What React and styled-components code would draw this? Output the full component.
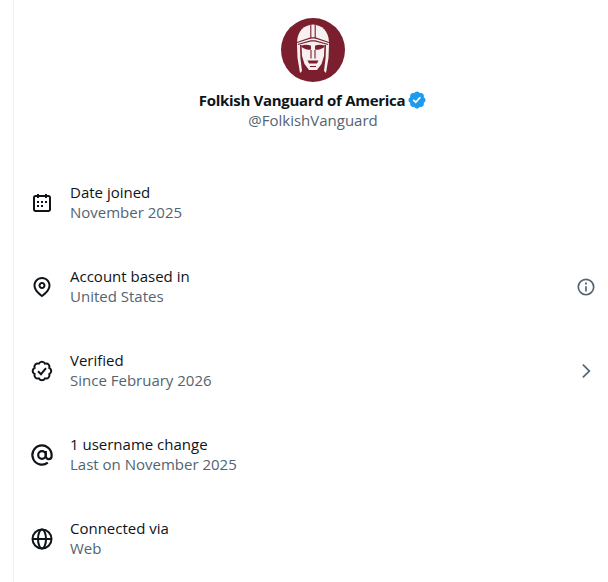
import React from "react";
import styled, { createGlobalStyle } from "styled-components";

const Global = createGlobalStyle`
  html, body { margin: 0; padding: 0; background: #fff; overflow: hidden; }
  body { font-family: "Open Sans", "Noto Sans", "Liberation Sans", sans-serif; }
`;

const Viewport = styled.div`
  width: 608px;
  height: 582px;
  overflow: hidden;
  padding-left: 13px;
  box-sizing: border-box;
`;

const Column = styled.main`
  width: 598px;
  min-height: 582px;
  border-left: 1px solid #eff3f4;
  box-sizing: content-box;
`;

const Header = styled.header`
  display: flex;
  flex-direction: column;
  align-items: center;
  padding-top: 18px;
  margin-bottom: 30px;
`;

const AvatarSvg = styled.svg`
  display: block;
  width: 64px;
  height: 64px;
`;

const NameRow = styled.div`
  display: flex;
  align-items: center;
  gap: 2px;
  margin-top: 8px;
  height: 20px;
`;

const Name = styled.span`
  font-size: 15px;
  line-height: 20px;
  font-weight: 700;
  letter-spacing: -0.3px;
  color: #0f1419;
`;

const Badge = styled.svg`
  width: 20px;
  height: 20px;
  fill: #1d9bf0;
  display: block;
`;

const Handle = styled.div`
  font-size: 15px;
  line-height: 20px;
  color: #536471;
`;

const List = styled.ul`
  list-style: none;
  margin: 0;
  padding: 0;
`;

const Row = styled.li`
  display: flex;
  align-items: center;
  height: 84px;
  padding: 0 16px;
  gap: 16px;
`;

const Icon = styled.svg`
  flex: none;
  width: 24px;
  height: 24px;
  margin-top: 2px;
  display: block;
  color: #0f1419;
`;

const Texts = styled.div`
  flex: 1;
  min-width: 0;
`;

const Title = styled.div`
  font-size: 15px;
  line-height: 20px;
  color: #0f1419;
`;

const Sub = styled.div`
  font-size: 15px;
  line-height: 20px;
  color: #536471;
`;

const TrailingIcon = styled.svg`
  flex: none;
  width: ${(p) => p.$size}px;
  height: ${(p) => p.$size}px;
  margin-top: 2px;
  display: block;
  color: #536471;
`;

const Avatar = () => (
  <AvatarSvg viewBox="0 0 64 64" aria-hidden="true">
    <circle cx="32" cy="32" r="32" fill="#7b1f2e" />
    <g fill="#f7f0f0">
      <path d="M32 6.5C23 7 16.5 13 16 24v3h32v-3C47.5 13 41 7 32 6.5z" />
      <path d="M16 27l.5 13L19 55l2-2-1.6-13-.4-13zM48 27l-.5 13L45 55l-2-2 1.6-13 .4-13z" />
      <path d="M20.5 25h23l-.5 13-2.5 8-4.5 6h-8l-4.5-6-2.5-8z" />
    </g>
    <g fill="none" stroke="#7b1f2e" strokeWidth="1.1">
      <path d="M29.8 7v13.5M34.2 7v13.5" />
      <path d="M16 24.5l13.8-4.6h4.4L48 24.5" />
      <path d="M16.8 26.5l13-3.6h4.4l13 3.6" />
      <path d="M30 32v8.5M34 32v8.5" />
      <path d="M29 48.5h6" />
    </g>
    <g fill="#7b1f2e">
      <path d="M20.5 27.5c3.5-1.3 7-1 9.5.3v3.6c-3.4.9-7.2-.4-9.5-2.6z" />
      <path d="M43.5 27.5c-3.5-1.3-7-1-9.5.3v3.6c3.4.9 7.2-.4 9.5-2.6z" />
      <path d="M26.5 42.5h11l-1.5 3h-8z" />
    </g>
  </AvatarSvg>
);

const rows = [
  {
    title: "Date joined",
    sub: "November 2025",
    icon: (
      <path fill="currentColor" d="M7 4V3h2v1h6V3h2v1h1.5C19.89 4 21 5.12 21 6.5v12c0 1.38-1.11 2.5-2.5 2.5h-13C4.12 21 3 19.88 3 18.5v-12C3 5.12 4.12 4 5.5 4H7zm0 2H5.5c-.27 0-.5.22-.5.5v12c0 .28.23.5.5.5h13c.28 0 .5-.22.5-.5v-12c0-.28-.22-.5-.5-.5H17v1h-2V6H9v1H7V6zm0 6h2v-2H7v2zm0 4h2v-2H7v2zm4-4h2v-2h-2v2zm0 4h2v-2h-2v2zm4-4h2v-2h-2v2z" />
    ),
  },
  {
    title: "Account based in",
    sub: "United States",
    trailing: "info",
    icon: (
      <path fill="currentColor" d="M12 7c-1.93 0-3.5 1.57-3.5 3.5S10.07 14 12 14s3.5-1.57 3.5-3.5S13.93 7 12 7zm0 5c-.827 0-1.5-.673-1.5-1.5S11.173 9 12 9s1.5.673 1.5 1.5S12.827 12 12 12zm0-10c-4.687 0-8.5 3.813-8.5 8.5 0 5.967 7.621 11.116 7.945 11.332l.555.37.555-.37c.324-.216 7.945-5.365 7.945-11.332C20.5 5.813 16.687 2 12 2zm0 17.77c-1.665-1.241-6.5-5.196-6.5-9.27C5.5 6.916 8.416 4 12 4s6.5 2.916 6.5 6.5c0 4.073-4.835 8.028-6.5 9.27z" />
    ),
  },
  {
    title: "Verified",
    sub: "Since February 2026",
    trailing: "chevron",
    icon: (
      <>
        <path fill="none" stroke="currentColor" strokeWidth="2" d="M21.25 12c0-1.3-.8-2.43-2-3.04.42-1.26.18-2.64-.74-3.56s-2.29-1.15-3.55-.74c-.6-1.19-1.74-1.99-3-1.99s-2.43.8-3.03 1.99c-1.27-.41-2.65-.18-3.56.74s-1.15 2.3-.73 3.56c-1.19.61-2 1.74-2 3.04s.81 2.43 2 3.04c-.42 1.26-.19 2.64.73 3.56s2.29 1.14 3.55.74c.61 1.19 1.74 1.99 3.04 1.99s2.44-.8 3.04-1.99c1.26.4 2.64.18 3.55-.74s1.16-2.3.74-3.56c1.19-.61 1.96-1.74 1.96-3.04z" />
        <path fill="none" stroke="currentColor" strokeWidth="2" d="M8 12.2l3 3 5-6" />
      </>
    ),
  },
  {
    title: "1 username change",
    sub: "Last on November 2025",
    icon: (
      <g fill="none" stroke="currentColor" strokeWidth="2.2">
        <circle cx="12" cy="12" r="3.8" />
        <path d="M15.8 8v5.2a2.9 2.9 0 0 0 5.8 0V12a9.6 9.6 0 1 0-3.8 7.7" />
      </g>
    ),
  },
  {
    title: "Connected via",
    sub: "Web",
    icon: (
      <g fill="none" stroke="currentColor" strokeWidth="2">
        <circle cx="12" cy="12" r="9.5" />
        <ellipse cx="12" cy="12" rx="4" ry="9.5" />
        <path d="M3 12h18" />
      </g>
    ),
  },
];

const Trailing = ({ kind }) =>
  kind === "info" ? (
    <TrailingIcon $size={20} viewBox="0 0 24 24" aria-hidden="true">
      <circle cx="12" cy="12" r="9.25" fill="none" stroke="currentColor" strokeWidth="2" />
      <path fill="currentColor" d="M11 11h2v6.5h-2zM10.9 6.6h2.2v2.3h-2.2z" />
    </TrailingIcon>
  ) : (
    <TrailingIcon $size={20} viewBox="0 0 24 24" aria-hidden="true">
      <path fill="currentColor" d="M14.586 12L7.543 4.96l1.414-1.42L17.414 12l-8.457 8.46-1.414-1.42L14.586 12z" />
    </TrailingIcon>
  );

export default function App() {
  return (
    <>
      <Global />
      <Viewport>
        <Column>
          <Header>
            <Avatar />
            <NameRow>
              <Name>Folkish Vanguard of America</Name>
              <Badge viewBox="0 0 24 24" aria-label="Verified account">
                <path d="M22.25 12c0-1.43-.88-2.67-2.19-3.34.46-1.39.2-2.9-.81-3.91s-2.52-1.27-3.91-.81c-.66-1.31-1.91-2.19-3.34-2.19s-2.67.88-3.33 2.19c-1.4-.46-2.91-.2-3.92.81s-1.26 2.52-.8 3.91c-1.31.67-2.2 1.91-2.2 3.34s.89 2.67 2.2 3.34c-.46 1.39-.21 2.9.8 3.91s2.52 1.26 3.91.81c.67 1.31 1.91 2.19 3.34 2.19s2.68-.88 3.34-2.19c1.39.45 2.9.2 3.91-.81s1.27-2.52.81-3.91c1.31-.67 2.19-1.91 2.19-3.34zm-11.71 4.2L6.8 12.46l1.41-1.42 2.26 2.26 4.8-5.23 1.47 1.36-6.2 6.77z" />
              </Badge>
            </NameRow>
            <Handle>@FolkishVanguard</Handle>
          </Header>
          <List>
            {rows.map((r) => (
              <Row key={r.title}>
                <Icon viewBox="0 0 24 24" aria-hidden="true">{r.icon}</Icon>
                <Texts>
                  <Title>{r.title}</Title>
                  <Sub>{r.sub}</Sub>
                </Texts>
                {r.trailing && <Trailing kind={r.trailing} />}
              </Row>
            ))}
          </List>
        </Column>
      </Viewport>
    </>
  );
}
